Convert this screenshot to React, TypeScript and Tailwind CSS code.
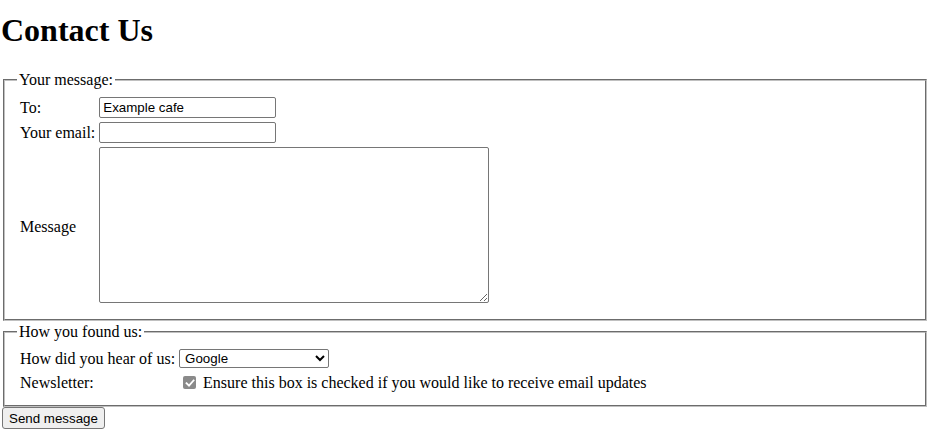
import React from "react";

export default function App() {
  return (
    <div className="min-h-[445px] bg-white text-black font-['Liberation_Serif','Times_New_Roman',serif] text-[16px] leading-[normal]">
      <h1 className="ml-[1px] mt-[12px] mb-[22px] text-[32px] font-bold leading-[37px]">Contact Us</h1>
      <form>
        <fieldset className="ml-[3px] w-[924px] border-2 [border-style:groove] border-[#c0c0c0] px-3 pt-[5px] pb-[10px]">
          <legend className="px-[2px] leading-[18px]">Your message:</legend>
          <table className="border-separate border-spacing-[2px]">
            <tbody>
              <tr>
                <td className="p-px">To:</td>
                <td className="p-px">
                  <input
                    type="text"
                    defaultValue="Example cafe"
                    className="block w-[177px] h-[21px] px-[3px] py-px border border-[#767676] rounded-[2px] font-['Liberation_Sans',Arial,sans-serif] text-[13.33px] leading-[15px] bg-white"
                  />
                </td>
              </tr>
              <tr>
                <td className="p-px">Your email:</td>
                <td className="p-px">
                  <input
                    type="email"
                    className="block w-[177px] h-[21px] px-[3px] py-px border border-[#767676] rounded-[2px] font-['Liberation_Sans',Arial,sans-serif] text-[13.33px] leading-[15px] bg-white"
                  />
                </td>
              </tr>
              <tr>
                <td className="p-px">Message</td>
                <td className="p-px">
                  <textarea className="block mb-[3px] w-[390px] h-[156px] px-[2px] py-px border border-[#767676] rounded-[2px] font-['Liberation_Mono',monospace] text-[13.33px] bg-white resize" />
                </td>
              </tr>
            </tbody>
          </table>
        </fieldset>
        <fieldset className="ml-[3px] mt-[2px] w-[924px] border-2 [border-style:groove] border-[#c0c0c0] px-3 pt-[5px] pb-[10px]">
          <legend className="px-[2px] leading-[18px]">How you found us:</legend>
          <table className="border-separate border-spacing-[2px]">
            <tbody>
              <tr>
                <td className="p-px">How did you hear of us:</td>
                <td className="p-px">
                  <select
                    defaultValue="google"
                    className="block w-[150px] h-[19px] pl-[1px] border border-[#767676] rounded-[2px] font-['Liberation_Sans',Arial,sans-serif] text-[13.33px] leading-[15px] bg-white"
                  >
                    <option value="google">Google</option>
                    <option value="friend">A friend</option>
                    <option value="ad">Advertisement</option>
                  </select>
                </td>
              </tr>
              <tr>
                <td className="px-px pt-[2px] pb-px">Newsletter:</td>
                <td className="px-px pt-[2px] pb-px">
                  <label className="flex items-center">
                    <span className="ml-[4px] mr-[3px] my-[3px] w-[13px] h-[13px] rounded-[2px] bg-[#8a8a8a] flex items-center justify-center">
                      <svg width="10" height="10" viewBox="0 0 10 10" fill="none">
                        <path d="M1.5 5.2 L4 7.6 L8.6 2.4" stroke="white" strokeWidth="1.8" strokeLinecap="square" />
                      </svg>
                    </span>
                    <span className="ml-[4px]">Ensure this box is checked if you would like to receive email updates</span>
                  </label>
                </td>
              </tr>
            </tbody>
          </table>
        </fieldset>
        <button
          type="submit"
          className="ml-[2px] h-[22px] px-[6px] border border-[#767676] rounded-[3px] bg-[#efefef] font-['Liberation_Sans',Arial,sans-serif] text-[13.33px] leading-[15px] text-black"
        >
          Send message
        </button>
      </form>
    </div>
  );
}
